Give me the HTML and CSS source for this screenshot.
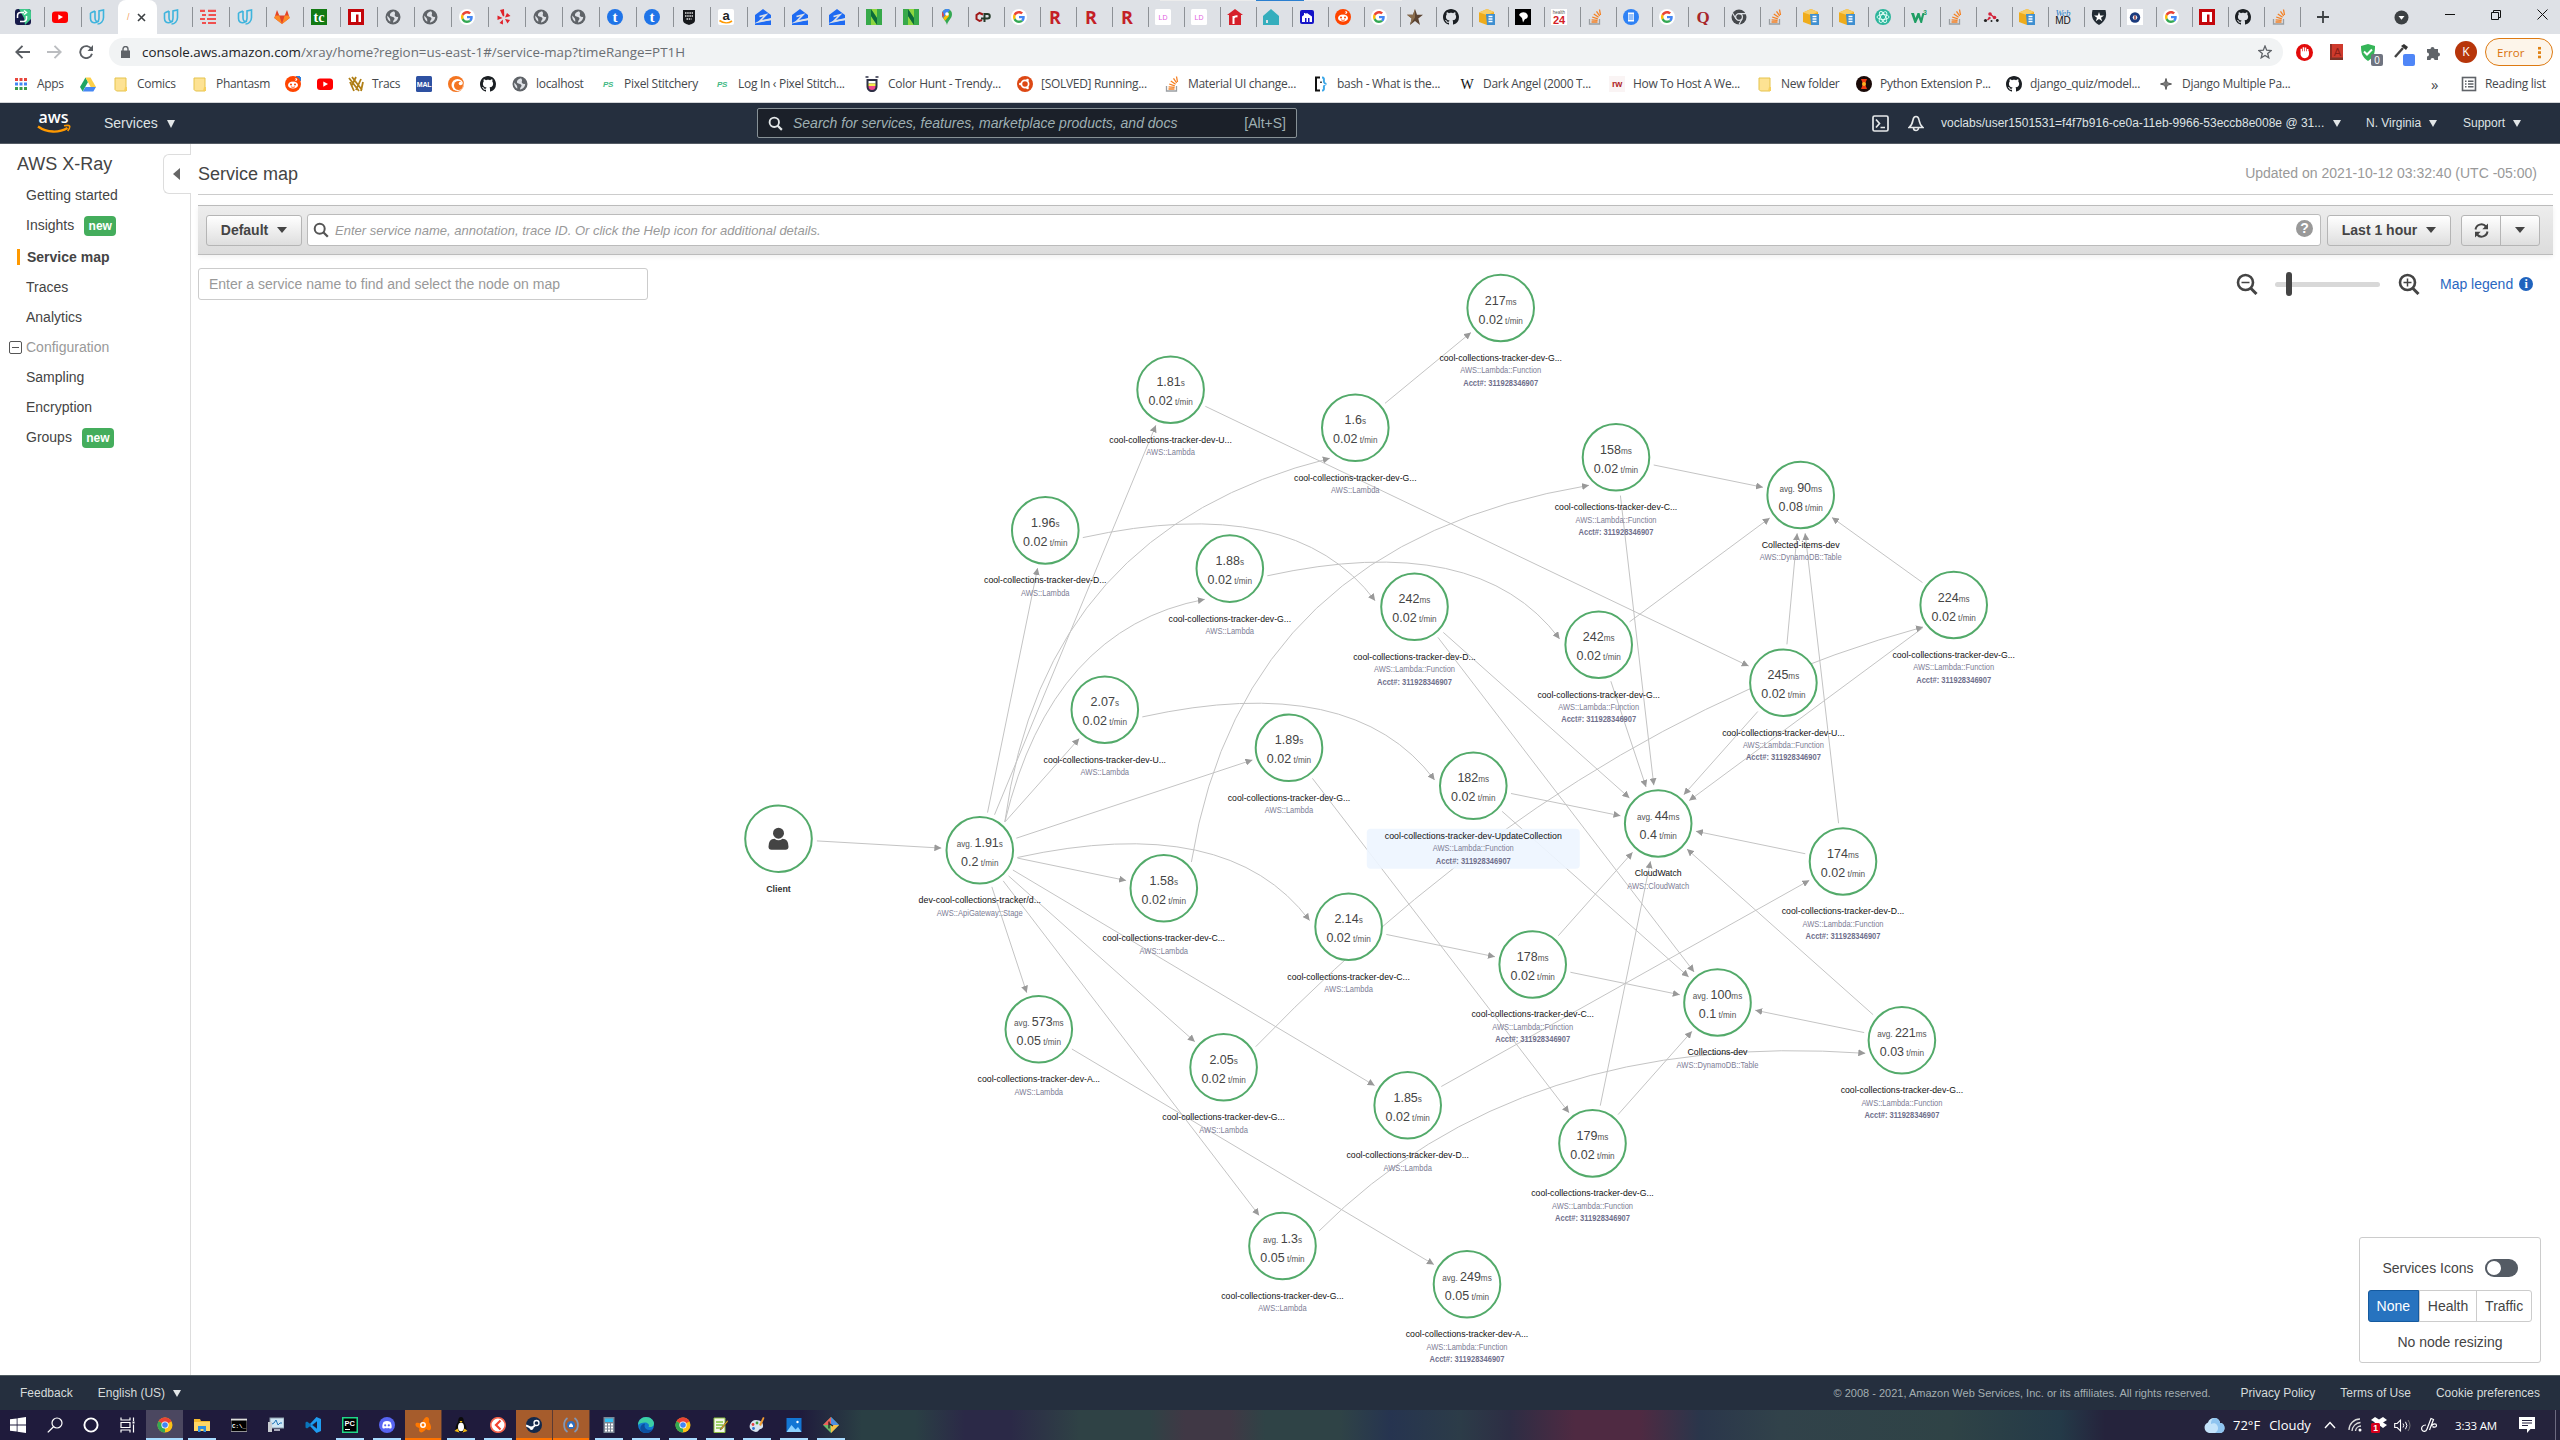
FILE: index.html
```html
<!DOCTYPE html>
<html lang="en">
<head>
<meta charset="utf-8">
<title>AWS X-Ray</title>
<link rel="stylesheet" href="styles.css">
</head>
<body>
<svg class="sprite" width="0" height="0" aria-hidden="true">
  <symbol id="globe" viewBox="0 0 16 16"><circle cx="8" cy="8" r="7.500" fill="#5f6368"/><path d="M9 2.2C6 3 4.600 4.500 5 6.500c.5 1.600 4 1 4.500 2.700.3 1.500-1.500 2-1.500 4.300 3-.6 5.200-3 5.200-5.800-1.600.6-3 .1-3.400-1.200C9.500 5 11 4.500 9 2.200zM2.300 6.500c-.5 2.500.8 5 2.900 6.200.4-2-.2-3.300-1.200-4.300z" fill="#dee1e6"/></symbol>
  <symbol id="google" viewBox="0 0 16 16"><circle cx="8" cy="8" r="8" fill="#fff"/><g transform="translate(2 2) scale(.25)"><path fill="#EA4335" d="M24 9.5c3.54 0 6.71 1.22 9.21 3.6l6.85-6.85C35.9 2.38 30.47 0 24 0 14.62 0 6.51 5.38 2.56 13.22l7.98 6.19C12.43 13.72 17.74 9.5 24 9.5z"/><path fill="#4285F4" d="M46.98 24.55c0-1.57-.15-3.09-.38-4.55H24v9.02h12.94c-.58 2.96-2.26 5.48-4.78 7.18l7.73 6c4.51-4.18 7.09-10.36 7.09-17.65z"/><path fill="#FBBC05" d="M10.53 28.59c-.48-1.45-.76-2.99-.76-4.59s.27-3.14.76-4.59l-7.98-6.19C.92 16.46 0 20.12 0 24c0 3.88.92 7.54 2.56 10.78l7.97-6.19z"/><path fill="#34A853" d="M24 48c6.48 0 11.93-2.13 15.89-5.81l-7.73-6c-2.15 1.45-4.92 2.3-8.16 2.3-6.26 0-11.57-4.22-13.47-9.91l-7.98 6.19C6.51 42.62 14.62 48 24 48z"/></g></symbol>
  <symbol id="github" viewBox="0 0 16 16"><path fill="#1b1f23" d="M8 0C3.58 0 0 3.58 0 8c0 3.54 2.29 6.53 5.47 7.59.4.07.55-.17.55-.38 0-.19-.01-.82-.01-1.49-2.01.37-2.53-.49-2.69-.94-.09-.23-.48-.94-.82-1.13-.28-.15-.68-.52-.01-.53.63-.01 1.08.58 1.23.82.72 1.21 1.87.87 2.33.66.07-.52.28-.87.51-1.07-1.78-.2-3.64-.89-3.64-3.95 0-.87.31-1.59.82-2.15-.08-.2-.36-1.02.08-2.12 0 0 .67-.21 2.2.82.64-.18 1.32-.27 2-.27s1.36.09 2 .27c1.53-1.04 2.2-.82 2.2-.82.44 1.1.16 1.92.08 2.12.51.56.82 1.27.82 2.15 0 3.07-1.87 3.75-3.65 3.95.29.25.54.73.54 1.48 0 1.07-.01 1.93-.01 2.2 0 .21.15.46.55.38A8.01 8.01 0 0016 8c0-4.42-3.58-8-8-8z"/></symbol>
  <symbol id="loop" viewBox="0 0 16 16"><rect width="16" height="16" rx="3" fill="#171a4a"/><path d="M4 0h9a3 3 0 013 3v7L10 16 9 9z" fill="#3ec98a"/><path d="M9 3.500H5.500a3 3 0 00-3 3V9M5 12.500h3.500a3 3 0 003-3V7M9 1.500l2.500 2L9 5.500" fill="none" stroke="#fff" stroke-width="1.500"/></symbol>
  <symbol id="youtube" viewBox="0 0 16 16"><rect y="2.500" width="16" height="11.500" rx="3" fill="#f00"/><path d="M6.300 5.500v5.200L11 8.100z" fill="#fff"/></symbol>
  <symbol id="udacity" viewBox="0 0 16 16"><path d="M1.500 4v5.500c0 6 8.500 5.500 8.500-.5V2l4.500-1v7.500c0 4-3 6.500-6 6.500M6 2v7c0 3 2 4.200 4 3.200M1.500 4L6 2" fill="none" stroke="#3fb4dd" stroke-width="1.600"/></symbol>
  <symbol id="bars" viewBox="0 0 16 16"><path d="M0 1.800h5M8 1.800h8M2 6h4M8.500 6H16M0 10h5M7 10h9M2 14h4M8 14h8" stroke="#f0504f" stroke-width="2.200"/></symbol>
  <symbol id="gitlab" viewBox="0 0 16 16"><path d="M8 15L.3 9 3 1l2.300 5.500h5.400L13 1l2.700 8z" fill="#e24329"/><path d="M8 15L.3 9l1-2.500h4zM8 15l7.700-6-1-2.500h-4z" fill="#fc8a26"/></symbol>
  <symbol id="tc" viewBox="0 0 16 16"><rect width="16" height="16" fill="#137a13"/><text x="8" y="12.500" text-anchor="middle" font-family="Liberation Serif,serif" font-weight="bold" font-size="14" fill="#fff">tc</text></symbol>
  <symbol id="npm" viewBox="0 0 16 16"><rect width="16" height="16" fill="#c4060b"/><path d="M3 3h10v10h-2.500V5.500H8V13H3z" fill="#fff"/></symbol>
  <symbol id="yelp" viewBox="0 0 16 16"><g fill="#e0222a"><path d="M4 1l4-1 .3 7L7 7.500zM1.500 6.500L6.500 9 1.500 11zM6.800 10.500L7 15.500 3.500 14zM9 10l5 1-2.500 3.500zM9 8.500l2-4.500 3.500 3z"/></g></symbol>
  <symbol id="tblue" viewBox="0 0 16 16"><circle cx="8" cy="8" r="8" fill="#1f74e8"/><text x="8" y="13" text-anchor="middle" font-family="Liberation Serif,serif" font-weight="bold" font-size="15" fill="#fff">t</text></symbol>
  <symbol id="badge" viewBox="0 0 16 16"><path d="M2 1h12v10c0 3-3 4-6 5-3-1-6-2-6-5z" fill="#16181c"/><path d="M4 4h8M4 7h8M5.500 10h5" stroke="#ddd" stroke-width="1.500" stroke-dasharray="1.500 .7"/></symbol>
  <symbol id="amazon" viewBox="0 0 16 16"><rect width="16" height="16" rx="2" fill="#fff"/><text x="8" y="10.500" text-anchor="middle" font-family="Liberation Sans,sans-serif" font-weight="bold" font-size="13" fill="#222">a</text><path d="M1.500 11.500c4 3 9 3 12.500.5" fill="none" stroke="#f90" stroke-width="1.600"/></symbol>
  <symbol id="zillow" viewBox="0 0 16 16"><path d="M8 0l8 6v3L4 12l-4 2V6z" fill="#1f6bf2"/><path d="M0 16v-1.500L16 11v5z" fill="#1f6bf2"/><path d="M4.500 7.500l6.500-1.700-6 6.200 11-1.500" fill="none" stroke="#dee1e6" stroke-width="1.600"/></symbol>
  <symbol id="nn" viewBox="0 0 16 16"><rect width="16" height="16" fill="#8ed63f"/><path d="M0 0h5l6 9V0h5v16h-5L5 7v9H0z" fill="#37a94a"/><path d="M5 0l6 9v7L5 7z" fill="#0d6b3a"/></symbol>
  <symbol id="maps" viewBox="0 0 16 16"><path d="M8 16C7 11 3 10 3 5a5 5 0 0110 0c0 5-4 6-5 11z" fill="#34a853"/><path d="M3 5a5 5 0 018-4L4 9C3.300 7.500 3 6.500 3 5z" fill="#4285f4"/><path d="M3.700 2.500L5 6.500 3.800 8.500C2.800 6.500 2.800 4 3.700 2.500z" fill="#ea4335"/><path d="M4.200 9L9 3.500l1 3.500-4 4.700z" fill="#fbbc04"/><circle cx="8" cy="5" r="1.800" fill="#fff"/></symbol>
  <symbol id="cp" viewBox="0 0 16 16"><path d="M8 5.500L4.500 4 1.500 6v4l3 2L7 11" fill="none" stroke="#a01818" stroke-width="2"/><path d="M9.500 13V5h3a2.200 2.200 0 010 4.500H6" fill="none" stroke="#263b2a" stroke-width="2"/></symbol>
  <symbol id="rr" viewBox="0 0 16 16"><text x="8" y="14.500" text-anchor="middle" font-family="Open Sans,sans-serif" font-weight="bold" font-size="18" fill="#c42026">R</text></symbol>
  <symbol id="ld" viewBox="0 0 16 16"><rect width="16" height="16" rx="1.500" fill="#fff"/><text x="8" y="10.500" text-anchor="middle" font-family="Liberation Sans,sans-serif" font-size="7" fill="#df5fdf">LD</text></symbol>
  <symbol id="rhouse" viewBox="0 0 16 16"><path d="M8 0l8 6h-2v10H2V6H0z" fill="#d6202a"/><path d="M6.500 15V7M6.500 9c1-1.500 2-2 4-1.500" stroke="#fff" stroke-width="2" fill="none"/></symbol>
  <symbol id="teal" viewBox="0 0 16 16"><path d="M8 0l8 7v9H0V7z" fill="#35aebd"/><path d="M3 11h2v3H3z" fill="#dee1e6"/></symbol>
  <symbol id="bluehouse" viewBox="0 0 16 16"><rect x="1" y="1" width="14" height="14" rx="2" fill="#1414c8"/><path d="M3 13V7.500L5 6V4h1.500v1L8 4l5 3.500V13h-2.500V9h-1.500v4H7.500V9H6v4z" fill="#fff"/></symbol>
  <symbol id="reddit" viewBox="0 0 16 16"><circle cx="8" cy="8" r="8" fill="#ff4500"/><ellipse cx="8" cy="9" rx="5" ry="3.600" fill="#fff"/><circle cx="6" cy="8.500" r="1" fill="#ff4500"/><circle cx="10" cy="8.500" r="1" fill="#ff4500"/><circle cx="11" cy="3.500" r="1.200" fill="#fff"/><path d="M8 5.500l.7-2.500 2.300.5M6 10.700c1.300.9 2.700.9 4 0" fill="none" stroke="#ff4500" stroke-width=".8"/></symbol>
  <symbol id="star" viewBox="0 0 16 16"><path d="M8 0l2 5.800h6l-4.700 3.700L13 16l-5-4-5 4 1.700-6.500L0 5.800h6z" fill="#5b4331"/><path d="M8 0v8.500L3 16l1.700-6.500L0 5.800h6z" fill="#8a6d4c"/></symbol>
  <symbol id="cube" viewBox="0 0 16 16"><path d="M0 3.500L8 0l7 3v10l-7 3-8-3z" fill="#efac1c"/><path d="M0 3.500L8 6l7-3L8 0z" fill="#f8cd66"/><path d="M7 5h9v11H8z" fill="#3f8fd0"/><path d="M9.500 7.500h4M9.500 10h4M9.500 12.500h4" stroke="#fff" stroke-width="1.300"/></symbol>
  <symbol id="blackdog" viewBox="0 0 16 16"><rect width="16" height="16" fill="#000"/><path d="M4 6c1-3 6-4 8-1 2 2 0 5-2 5L8 13.500 7 9z" fill="#fff"/></symbol>
  <symbol id="h24" viewBox="0 0 16 16"><rect width="16" height="16" fill="#fff"/><text x="8" y="4.500" text-anchor="middle" font-family="Liberation Sans,sans-serif" font-size="4.500" fill="#555">health</text><text x="8" y="14.500" text-anchor="middle" font-family="Liberation Sans,sans-serif" font-weight="bold" font-size="11" fill="#d42027">24</text></symbol>
  <symbol id="stack" viewBox="0 0 16 16"><path d="M2.500 10v5h10v-5" fill="none" stroke="#9a9ea2" stroke-width="1.300"/><path d="M4.500 13h6M4.600 10.800l6 .6M5.200 8l5.600 1.800M6.800 5l4.800 3.300M9.500 2.300l3.200 4.700M12.500.5l1 5.500" stroke="#f48024" stroke-width="1.300"/></symbol>
  <symbol id="bluedoc" viewBox="0 0 16 16"><circle cx="8" cy="8" r="8" fill="#2f82f5"/><path d="M5 3.500h6v9H5z" fill="#fff"/><path d="M5.500 6h5M5.500 8h5M5.500 10h5" stroke="#2f82f5"/></symbol>
  <symbol id="quora" viewBox="0 0 16 16"><text x="8" y="13.500" text-anchor="middle" font-family="Liberation Serif,serif" font-weight="bold" font-size="17" fill="#a8262a">Q</text></symbol>
  <symbol id="chromegrey" viewBox="0 0 16 16"><circle cx="8" cy="8" r="7.500" fill="#45484c"/><circle cx="8" cy="8" r="3.400" fill="#45484c" stroke="#dee1e6" stroke-width="1.200"/><path d="M8 4.600h7M5 9.700L1.500 4M11 9.700L8 15.500" stroke="#dee1e6" stroke-width="1.200"/></symbol>
  <symbol id="atom" viewBox="0 0 16 16"><circle cx="8" cy="8" r="8" fill="#2cb59b"/><g fill="none" stroke="#e5fff8" stroke-width=".9"><ellipse cx="8" cy="8" rx="6" ry="2.500"/><ellipse cx="8" cy="8" rx="6" ry="2.500" transform="rotate(60 8 8)"/><ellipse cx="8" cy="8" rx="6" ry="2.500" transform="rotate(120 8 8)"/></g></symbol>
  <symbol id="w3" viewBox="0 0 16 16"><path d="M0 4h3l1.500 5L6.500 4h2L10 9l1.500-5h2L11 14H9.500L7.500 8.500 5 14H3.500z" fill="#1f9e64"/><text x="14" y="5.500" text-anchor="middle" font-family="Liberation Sans,sans-serif" font-weight="bold" font-size="6.500" fill="#1f9e64">3</text></symbol>
  <symbol id="dots" viewBox="0 0 16 16"><path d="M7 5l5 4M4.500 11l2-2" stroke="#d4223a" stroke-width="1.500"/><g fill="#d4223a"><circle cx="7" cy="5" r="1.800"/><circle cx="11.500" cy="8.500" r="1.800"/><circle cx="6.500" cy="9" r="1.200"/></g><g fill="#222"><circle cx="2.500" cy="11.500" r="1.600"/><circle cx="14.300" cy="11.500" r="1.400"/><circle cx="8.500" cy="12" r="1"/></g></symbol>
  <symbol id="webmd" viewBox="0 0 16 16"><text x="8" y="6.500" text-anchor="middle" font-family="Liberation Serif,serif" font-style="italic" font-size="9" fill="#2a7fc4">Web</text><text x="8" y="15" text-anchor="middle" font-family="Liberation Sans,sans-serif" font-size="10" fill="#111">MD</text></symbol>
  <symbol id="shield" viewBox="0 0 16 16"><path d="M1.500 1h13c1.500 6 .5 11-6.500 15C1 12 0 7 1.500 1z" fill="#222b33"/><path d="M8 3l1.200 3.500H13L10 8.700l1.200 3.500L8 10l-3.200 2.200L6 8.700 3 6.500h3.800z" fill="#fff"/></symbol>
  <symbol id="seal" viewBox="0 0 16 16"><rect width="16" height="16" fill="#fff"/><circle cx="8" cy="8.500" r="5.200" fill="#1b3a7d"/><circle cx="8" cy="8.500" r="2.300" fill="#e7edf5"/><path d="M8 6.500v4" stroke="#8a2a2a" stroke-width="1.400"/></symbol>

  <symbol id="apps" viewBox="0 0 16 16"><path d="M2 3.500h12" stroke="#e8453c" stroke-width="3" stroke-dasharray="3 1.500"/><path d="M2 8h12" stroke="#4285f4" stroke-width="3" stroke-dasharray="3 1.500"/><path d="M2 12.500h12" stroke="#3b9c4b" stroke-width="3" stroke-dasharray="3 1.500"/></symbol>
  <symbol id="drive" viewBox="0 0 16 16"><path d="M5.500 1.500L0 11l2.700 4.500L8 6z" fill="#1fa463"/><path d="M5.500 1.500h5L16 11h-5.300z" fill="#fdd049"/><path d="M5.500 11H16l-2.700 4.500H2.700z" fill="#4688f4"/></symbol>
  <symbol id="folder" viewBox="0 0 16 16"><path d="M2 2h11v13H3.500L2 13.500z" fill="#fde293" stroke="#e5c34c"/><path d="M12 11h2v4h-3z" fill="#f6cf5c"/></symbol>
  <symbol id="tracs" viewBox="0 0 16 16"><path d="M1 2l10 13M4 1l10 13M2 6l4 9M8 1l-4 8M13 3L8 14M15 6l-2 9" stroke="#b07f16" stroke-width="1.800"/></symbol>
  <symbol id="mal" viewBox="0 0 16 16"><rect width="16" height="16" rx="1.500" fill="#2e51a2"/><text x="8" y="11" text-anchor="middle" font-family="Liberation Sans,sans-serif" font-weight="bold" font-size="7" fill="#fff">MAL</text></symbol>
  <symbol id="crunchy" viewBox="0 0 16 16"><circle cx="8" cy="8" r="8" fill="#f47521"/><circle cx="9.500" cy="9" r="6" fill="#fff"/><circle cx="10.500" cy="9.500" r="4.500" fill="#f47521"/><circle cx="12.500" cy="7.500" r="1.800" fill="#fff"/></symbol>
  <symbol id="ps" viewBox="0 0 16 16"><text x="8" y="11" text-anchor="middle" font-family="Liberation Sans,sans-serif" font-style="italic" font-weight="bold" font-size="8" fill="#41b883">PS</text></symbol>
  <symbol id="hunt" viewBox="0 0 16 16"><path d="M2.500 3h11v7c0 4-2.500 6-5.500 6s-5.500-2-5.500-6z" fill="#2d2f45"/><path d="M4.500 5h7v2.500h-7z" fill="#fff"/><path d="M4.500 7.500h7V10h-7z" fill="#f9ed4b"/><path d="M4.500 10h7c0 3-1.500 4-3.500 4s-3.500-1-3.500-4z" fill="#f0478b"/><path d="M1.500 1h3M11.500 1h3" stroke="#2d2f45" stroke-width="1.500"/></symbol>
  <symbol id="ubuntu" viewBox="0 0 16 16"><circle cx="8" cy="8" r="8" fill="#dd4814"/><circle cx="8" cy="8" r="3.600" fill="none" stroke="#fff" stroke-width="1.700"/><circle cx="3.300" cy="8" r="1.300" fill="#fff"/><circle cx="10.500" cy="4" r="1.300" fill="#fff"/><circle cx="10.500" cy="12" r="1.300" fill="#fff"/></symbol>
  <symbol id="braces" viewBox="0 0 16 16"><path d="M7 1.500H3v13h4" fill="none" stroke="#111" stroke-width="2"/><path d="M9 1.500c3 0 1.500 3 2 4.500.3 1 1 2 2.500 2-1.500 0-2.200 1-2.500 2-.5 1.500 1 4.500-2 4.500" fill="none" stroke="#3ea8e8" stroke-width="2"/><path d="M8 5.500v1.500" stroke="#111" stroke-width="1.500"/></symbol>
  <symbol id="wiki" viewBox="0 0 16 16"><text x="8" y="13" text-anchor="middle" font-family="Liberation Serif,serif" font-size="14" fill="#111">W</text></symbol>
  <symbol id="rw" viewBox="0 0 16 16"><rect width="16" height="16" fill="#faf4f4"/><text x="8" y="11" text-anchor="middle" font-family="Liberation Sans,sans-serif" font-weight="bold" font-size="9" fill="#b01e28">rw</text></symbol>
  <symbol id="pyext" viewBox="0 0 16 16"><circle cx="8" cy="8" r="8" fill="#1a0a08"/><path d="M5 3h6L9 8l2 5H5l2-5z" fill="#f03a12"/><circle cx="8" cy="8" r="2" fill="#ffb020"/></symbol>
  <symbol id="spark" viewBox="0 0 16 16"><path d="M8 3l1.300 3.700L13.500 8 9.300 9.300 8 13 6.700 9.300 2.500 8l4.200-1.300z" fill="#888" stroke="#555" stroke-width="1"/><path d="M8 2v12" stroke="#666"/></symbol>

  <symbol id="chrome" viewBox="0 0 16 16"><circle cx="8" cy="8" r="7.500" fill="#fbc116"/><path d="M8 8L1.500 4.250A7.500 7.500 0 0114.500 4.250z" fill="#ea4335"/><path d="M8 8l0 7.500A7.500 7.500 0 011.500 4.250z" fill="#34a853"/><circle cx="8" cy="8" r="3.600" fill="#fff"/><circle cx="8" cy="8" r="2.800" fill="#4285f4"/></symbol>
  <symbol id="windows" viewBox="0 0 16 16"><path d="M0 2.300l6.700-.9v6.100H0zM7.500 1.300L16 0v7.500H7.500zM0 8.400h6.700v6.200L0 13.700zM7.500 8.400H16V16l-8.500-1.200z" fill="#fff"/></symbol>
  <symbol id="tsearch" viewBox="0 0 16 16"><circle cx="10" cy="6" r="5" fill="none" stroke="#fff" stroke-width="1.200"/><path d="M6.500 9.700L.8 15.400" stroke="#fff" stroke-width="1.300"/></symbol>
  <symbol id="cortana" viewBox="0 0 16 16"><circle cx="8" cy="8" r="6.600" fill="none" stroke="#fff" stroke-width="1.900"/></symbol>
  <symbol id="taskview" viewBox="0 0 16 16"><path d="M1 .5V3h9V.5M1 15.500V13h9v2.500M1 5.500h9v5H1zM13.500.5V4M13.500 7.500v8" fill="none" stroke="#fff" stroke-width="1.200"/><path d="M12.500 4.500h2v2h-2z" fill="#fff"/></symbol>
  <symbol id="explorer" viewBox="0 0 16 16"><path d="M0 2h6l1 2h9v10H0z" fill="#f5b92e"/><path d="M0 5h16v9H0z" fill="#ffd766"/><path d="M4 9h8v6h-2.500v-3h-3v3H4z" fill="#2f8fe0"/></symbol>
  <symbol id="cmd" viewBox="0 0 16 16"><rect y="2" width="16" height="12.500" fill="#000" stroke="#b5b5b5" stroke-width=".8"/><path d="M0 2h16v1.500H0z" fill="#ddd"/><text x="1" y="11" font-family="Liberation Mono,monospace" font-weight="bold" font-size="5.800" fill="#fff">C:\_</text></symbol>
  <symbol id="monitor" viewBox="0 0 16 16"><rect x="2" y="1" width="14" height="10" fill="#cfe7f5" stroke="#90a0ac"/><path d="M4 7l2-1 2-3 2 5 2-2h2" fill="none" stroke="#2577b8"/><rect y="5" width="4" height="10" fill="#c9ccd1"/><path d="M6 12h6v2H6z" fill="#aab"/></symbol>
  <symbol id="vscode" viewBox="0 0 16 16"><path d="M11.500 0L16 2v12l-4.500 2L4 8z" fill="#1f9cf0"/><path d="M12 4v8L2 4.500.5 5.500v5L2 11.500z" fill="#0a75bb"/><path d="M12 4.500L7.500 8l4.500 3.500z" fill="#1e1a3a"/></symbol>
  <symbol id="pycharm" viewBox="0 0 16 16"><rect width="16" height="16" fill="#21d789"/><rect x="1.500" y="1.500" width="13" height="13" fill="#000"/><text x="2.500" y="8.500" font-family="Liberation Sans,sans-serif" font-weight="bold" font-size="7.500" fill="#fff">PC</text><path d="M3 12.500h5" stroke="#fff"/></symbol>
  <symbol id="discord" viewBox="0 0 16 16"><circle cx="8" cy="8" r="8" fill="#5865f2"/><path d="M4.500 5c2-1.200 5-1.200 7 0 1 2 1.500 4 1 6-1 .7-2 .8-2.500 0-1.300.3-2.700.3-4 0-.5.800-1.500.7-2.500 0-.5-2 0-4 1-6z" fill="#fff"/><circle cx="6.200" cy="8.300" r="1.100" fill="#5865f2"/><circle cx="9.800" cy="8.300" r="1.100" fill="#5865f2"/></symbol>
  <symbol id="avast" viewBox="0 0 16 16"><path d="M12 0c3 1 2 4 2 5 2 3 3 6 1 8-2 1-3-1-4-1-2 3-5 4-6 3-2-2 0-3-1-4C0 10 0 7 1 6c2-1 4 1 5 0 2-1 3-6 6-6z" fill="#ff7800"/><circle cx="8" cy="8" r="2.200" fill="none" stroke="#fff" stroke-width="1.500"/></symbol>
  <symbol id="tux" viewBox="0 0 16 16"><path d="M8 0c3 0 2.500 3.500 3 5 1 2 3.500 5 2 8-2 3-8 3-10 0-1.500-3 1-6 2-8C5.500 3.500 5 0 8 0z" fill="#0b0b0b"/><ellipse cx="8" cy="10" rx="3" ry="4.300" fill="#fff"/><path d="M6.500 4h3L8 6zM1.500 14l3-2.500 2 4zM14.500 14l-3-2.500-2 4z" fill="#f8bf13"/></symbol>
  <symbol id="redk" viewBox="0 0 16 16"><circle cx="8" cy="8" r="7.300" fill="#fff" stroke="#f4644d" stroke-width="1.600"/><path d="M10.500 3.500L6 8l4.500 4.500" fill="none" stroke="#f4442e" stroke-width="2.200"/></symbol>
  <symbol id="steam" viewBox="0 0 16 16"><circle cx="8" cy="8" r="8" fill="#13294b"/><circle cx="10.500" cy="6" r="2.500" fill="none" stroke="#fff" stroke-width="1.300"/><path d="M0 8.500L5.500 11 9 8.500" fill="none" stroke="#fff" stroke-width="2"/><circle cx="5.500" cy="11.300" r="1.800" fill="#fff"/></symbol>
  <symbol id="ring" viewBox="0 0 16 16"><path d="M4.500 1C0 4 0 12 4.500 15M11.500 1C16 4 16 12 11.500 15" fill="none" stroke="#8296b5" stroke-width="1.800"/><circle cx="8" cy="8" r="4" fill="#2f6fc0"/><path d="M6 8.300L8 6l2 2.300V10H6z" fill="#fff"/></symbol>
  <symbol id="calc" viewBox="0 0 16 16"><rect x="2.500" width="11" height="16" fill="#7b8794"/><path d="M4 1.500h8V5H4z" fill="#33c0f3"/><path d="M4 7.500h8M4 10.500h8M4 13.500h8" stroke="#fff" stroke-width="1.800" stroke-dasharray="2 1"/></symbol>
  <symbol id="edge" viewBox="0 0 16 16"><circle cx="8" cy="8" r="8" fill="#1279cf"/><path d="M0 8C0 3 4 0 8 0c5 0 8 3.500 8 6.500 0 3-3 4-5.500 3.500C12 8 10 5.500 7 5.500 4 5.500 1 6.500 0 8z" fill="#3ccfa5"/><path d="M6.500 9c.5 4 5 5 8.500 3-2 4-8 5.500-12 2C1 11 3 7 7 6.500z" fill="#0c4f9f"/></symbol>
  <symbol id="notepad" viewBox="0 0 16 16"><path d="M2 1h11v14.500H2z" fill="#f4f8ea" stroke="#8bbf3f"/><path d="M4 5h7M4 8h7M4 11h5" stroke="#83c441" stroke-width="1.600"/><path d="M15.500 3L9 11l-1 2 2-1 6-7.500z" fill="#f7b512" stroke="#333" stroke-width=".5"/></symbol>
  <symbol id="paint" viewBox="0 0 16 16"><path d="M7 3c5 0 7.500 3 7 6.500-.5 3-3 2-4 3.500-1 2-3 2.500-5 1.500C1 13 0 10 1 7.500 2 5 4 3 7 3z" fill="#d7e4f0"/><circle cx="4" cy="7.500" r="1.400" fill="#e23e3e"/><circle cx="8" cy="6" r="1.400" fill="#3c9c3c"/><circle cx="4.500" cy="11.500" r="1.400" fill="#2f75d0"/><path d="M10 8l4-8 1.500.8L12 9z" fill="#f09c32"/></symbol>
  <symbol id="photos" viewBox="0 0 16 16"><rect x=".5" y="1" width="15" height="14" fill="#1376d4"/><path d="M.5 15l5-7 4 4.500L12 10l3.500 5z" fill="#8bd1ff"/><circle cx="11.500" cy="5" r="1.200" fill="#fff"/></symbol>
  <symbol id="gitbash" viewBox="0 0 16 16"><path d="M8 0l8 8-8 8-8-8z" fill="#6ab96a"/><path d="M8 0l8 8H8z" fill="#4f8fe0"/><path d="M8 0v8H0z" fill="#f0605a"/><path d="M8 16V8h8z" fill="#f5c04a"/><path d="M6 4.500v7M6 6.500l4 2.500" stroke="#222" stroke-width="1.300"/></symbol>
  <symbol id="mag" viewBox="0 0 16 16"><circle cx="6.700" cy="6.700" r="5" fill="none" stroke="currentColor" stroke-width="2"/><path d="M10.300 10.300l4.500 4.500" stroke="currentColor" stroke-width="2.300"/></symbol>
</svg>

<div class="screen">
  <div class="tabstrip">
    <div class="topbar"></div>
    <div class="tabs tabs-a" id="tabs-a"></div>
    <div class="tabs tabs-b" id="tabs-b"></div>
    <svg class="plus" width="14" height="14"><path d="M7 1v12M1 7h12" stroke="#3c4043" stroke-width="1.800"/></svg>
    <div class="winctl">
      <svg width="15" height="15" viewBox="0 0 15 15"><circle cx="7.500" cy="7.500" r="7" fill="#3c4043"/><path d="M4.500 6l3 3.800 3-3.800z" fill="#fff"/></svg>
      <svg width="10" height="12" viewBox="0 0 10 12"><path d="M0 3.500h10" stroke="#111"/></svg>
      <svg width="10" height="10" viewBox="0 0 10 10"><path d="M.5 2.500h7v7h-7zM2.500 2.500v-2h7v7h-2" fill="none" stroke="#111"/></svg>
      <svg width="11" height="11" viewBox="0 0 11 11"><path d="M.5.500l10 10M10.500.500l-10 10" stroke="#111"/></svg>
    </div>
  </div>

  <div class="addressbar">
    <div class="navbtns">
      <svg width="15" height="14" viewBox="0 0 15 14"><path d="M7.500.800L1.300 7l6.200 6.200M1.500 7H15" fill="none" stroke="#5a5e63" stroke-width="1.900"/></svg>
      <svg width="15" height="14" viewBox="0 0 15 14"><path d="M7.500.800L13.700 7l-6.200 6.200M13.500 7H0" fill="none" stroke="#bbbdc0" stroke-width="1.900"/></svg>
      <svg width="15" height="14" viewBox="0 0 15 14"><path d="M12.500 4.200A6 6 0 1013 8.800" fill="none" stroke="#5a5e63" stroke-width="1.900"/><path d="M14 0v6H8.500z" fill="#5a5e63"/></svg>
    </div>
    <div class="pill">
      <svg width="9" height="12" viewBox="0 0 9 12"><path d="M0 4.500h9V12H0z" fill="#5f6368"/><path d="M2 5V3a2.500 2.500 0 015 0v2" fill="none" stroke="#5f6368" stroke-width="1.400"/></svg>
      <span class="url">console.aws.amazon.com<span class="path">/xray/home?region=us-east-1#/service-map?timeRange=PT1H</span></span>
      <svg class="bkstar" width="14" height="14" viewBox="0 0 14 14"><path d="M7 1l1.700 4.200 4.500.3L9.700 8.400l1.100 4.400L7 10.400l-3.800 2.400 1.100-4.400L.8 5.500l4.500-.3z" fill="none" stroke="#5f6368" stroke-width="1.300"/></svg>
    </div>
    <div class="exts">
      <svg width="17" height="17" viewBox="0 0 16 16"><circle cx="8" cy="8" r="8" fill="#e20a0a"/><path d="M5 8V4.500M7 7V3M9 7V3.300M11 8V4.800M5 7.500h6.500V10c-1 3.500-5 3.500-6.500 0z" stroke="#fff" stroke-width="1.400" fill="#fff"/></svg>
      <svg width="14" height="16" viewBox="0 0 14 16"><path d="M0 0h13v14H0z" fill="#cf3a2c"/><path d="M0 13.500h13V16H0z" fill="#7d3328"/><path d="M0 0h2v14H0z" fill="#8f3026"/><text x="7.500" y="11.500" text-anchor="middle" font-family="Liberation Sans,sans-serif" font-size="11" fill="#8b1f18">A</text></svg>
      <svg width="23" height="22" viewBox="0 0 23 22"><path d="M1 2l7-2 7 2c0 7-1 11-7 15C2 13 1 9 1 2z" fill="#35b558"/><path d="M4 7.500l3 3 5-5" fill="none" stroke="#fff" stroke-width="2"/><rect x="11" y="10" width="12" height="12" rx="2" fill="#6f7480"/><text x="17" y="19.500" text-anchor="middle" font-family="Liberation Sans,sans-serif" font-size="10" fill="#fff">0</text></svg>
      <svg width="23" height="22" viewBox="0 0 23 22"><path d="M3 13L11 4" stroke="#444" stroke-width="2.400"/><path d="M9 2l5 4 2-3-4-3z" fill="#333"/><rect x="11" y="10" width="12" height="12" rx="2" fill="#4f86f7"/></svg>
      <svg width="15" height="15" viewBox="0 0 15 15"><path d="M1 4h3.500a2 2 0 114 0H12v3.500a2 2 0 110 4V15H8.500a2 2 0 10-4 0H1v-3.500a2 2 0 100-4z" fill="#5f6368"/></svg>
      <span class="avatar">K</span>
      <span class="error">Error<i></i></span>
    </div>
  </div>

  <div class="bookmarks">
    <div class="bm"><svg><use href="#apps"/></svg>Apps</div>
    <div class="bm"><svg><use href="#drive"/></svg></div>
    <div class="bm"><svg><use href="#folder"/></svg>Comics</div>
    <div class="bm"><svg><use href="#folder"/></svg>Phantasm</div>
    <div class="bm dot"><svg><use href="#reddit"/></svg></div>
    <div class="bm"><svg><use href="#youtube"/></svg></div>
    <div class="bm"><svg><use href="#tracs"/></svg>Tracs</div>
    <div class="bm"><svg><use href="#mal"/></svg></div>
    <div class="bm"><svg><use href="#crunchy"/></svg></div>
    <div class="bm"><svg><use href="#github"/></svg></div>
    <div class="bm"><svg><use href="#globe"/></svg>localhost</div>
    <div class="bm"><svg><use href="#ps"/></svg>Pixel Stitchery</div>
    <div class="bm"><svg><use href="#ps"/></svg>Log In ‹ Pixel Stitch...</div>
    <div class="bm"><svg><use href="#hunt"/></svg>Color Hunt - Trendy...</div>
    <div class="bm"><svg><use href="#ubuntu"/></svg>[SOLVED] Running...</div>
    <div class="bm"><svg><use href="#stack"/></svg>Material UI change...</div>
    <div class="bm"><svg><use href="#braces"/></svg>bash - What is the...</div>
    <div class="bm"><svg><use href="#wiki"/></svg>Dark Angel (2000 T...</div>
    <div class="bm"><svg><use href="#rw"/></svg>How To Host A We...</div>
    <div class="bm"><svg><use href="#folder"/></svg>New folder</div>
    <div class="bm"><svg><use href="#pyext"/></svg>Python Extension P...</div>
    <div class="bm"><svg><use href="#github"/></svg>django_quiz/model...</div>
    <div class="bm"><svg><use href="#spark"/></svg>Django Multiple Pa...</div>
    <div class="bm more">»</div>
    <div class="bm reading"><svg viewBox="0 0 16 16"><rect x="1.500" y="1.500" width="13" height="13" fill="none" stroke="#5f6368" stroke-width="1.600"/><path d="M4 5.200h1.500M7 5.200h5.500M4 8h1.500M7 8h5.500M4 10.800h1.500M7 10.800h5.500" stroke="#5f6368" stroke-width="1.400"/></svg>Reading list</div>
  </div>

  <header class="aws">
    <svg class="awslogo" width="34" height="22" viewBox="0 0 34 22"><text x="16.500" y="11" text-anchor="middle" font-family="Open Sans,sans-serif" font-weight="600" font-size="16" textLength="30" lengthAdjust="spacingAndGlyphs" fill="#fff">aws</text><path d="M1 14.500c9 6.500 21 6.500 29.500 1.500" fill="none" stroke="#f90" stroke-width="2.400"/><path d="M27 13.800c3-.6 5-.5 5.500.2s-.3 3-1.800 5" fill="none" stroke="#f90" stroke-width="1.600"/></svg>
    <span class="services">Services <b class="tri"></b></span>
    <div class="awssearch"><svg width="15" height="15"><use href="#mag"/></svg><em>Search for services, features, marketplace products, and docs</em><span>[Alt+S]</span></div>
    <svg class="shell" width="17" height="17" viewBox="0 0 17 17"><rect x="1" y="1" width="15" height="15" rx="1.500" fill="none" stroke="#e6e9ea" stroke-width="1.700"/><path d="M4 4.500l3.500 4L4 12.500M8.500 12.500H13" fill="none" stroke="#e6e9ea" stroke-width="1.700"/></svg>
    <svg class="bell" width="16" height="17" viewBox="0 0 16 17"><path d="M1 12.500c2.500-2 3.500-4.500 4-7.500.3-2 1-3.500 3-3.500s2.700 1.500 3 3.500c.5 3 1.500 5.500 4 7.500zM5.500 13a2.500 2.500 0 005 0" fill="none" stroke="#e6e9ea" stroke-width="1.600"/></svg>
    <span class="hitem user">voclabs/user1501531=f4f7b916-ce0a-11eb-9966-53eccb8e008e @ 31... <b class="tri"></b></span>
    <span class="hitem region">N. Virginia <b class="tri"></b></span>
    <span class="hitem support">Support <b class="tri"></b></span>
  </header>

  <div class="main">
    <nav class="side">
      <h1>AWS X-Ray</h1>
      <a>Getting started</a>
      <a>Insights <span class="new">new</span></a>
      <a class="on">Service map</a>
      <a>Traces</a>
      <a>Analytics</a>
      <a class="cfg">Configuration</a>
      <a>Sampling</a>
      <a>Encryption</a>
      <a>Groups <span class="new">new</span></a>
      <div class="collapse"></div>
    </nav>
    <section class="content">
      <div class="titlebar"><h2>Service map</h2><span>Updated on 2021-10-12 03:32:40 (UTC -05:00)</span></div>
      <div class="toolbar">
        <div class="btn default">Default <b class="caret"></b></div>
        <div class="query"><svg width="16" height="16"><use href="#mag"/></svg><em>Enter service name, annotation, trace ID. Or click the Help icon for additional details.</em><i class="help">?</i></div>
        <div class="btn hour">Last 1 hour <b class="caret"></b></div>
        <div class="btn pair"><span><svg width="15" height="15" viewBox="0 0 15 15"><path d="M1.500 6.500A6 6 0 0112 3.500M13.500 8.500A6 6 0 013 11.500" fill="none" stroke="#444" stroke-width="2"/><path d="M14 .5v5.700H8.300zM1 14.500V8.800h5.700z" fill="#444"/></svg></span><span><b class="caret"></b></span></div>
      </div>
      <div class="maptools">
        <div class="find">Enter a service name to find and select the node on map</div>
        <svg class="zoomico" width="22" height="22" viewBox="0 0 22 22"><circle cx="9.500" cy="9.500" r="7.500" fill="none" stroke="#444" stroke-width="2.600"/><path d="M14.500 15l6 6" stroke="#444" stroke-width="3"/><path d="M5.500 9.500h8" stroke="#444" stroke-width="1.500"/></svg>
        <div class="slider"><i></i></div>
        <svg class="zoomico" width="22" height="22" viewBox="0 0 22 22"><circle cx="9.500" cy="9.500" r="7.500" fill="none" stroke="#444" stroke-width="2.600"/><path d="M14.500 15l6 6" stroke="#444" stroke-width="3"/><path d="M5.500 9.500h8M9.500 5.500v8" stroke="#444" stroke-width="1.500"/></svg>
        <span class="legendlink">Map legend <i>i</i></span>
      </div>
      <div class="resize">
        <div class="row">Services Icons <i class="toggle"></i></div>
        <div class="seg"><span class="sel">None</span><span>Health</span><span>Traffic</span></div>
        <div class="row note">No node resizing</div>
      </div>
    </section>
    <svg class="map" id="map" width="2560" height="1231" viewBox="0 144 2560 1231">
      <defs><marker id="arrow" viewBox="0 0 7 7" refX="7" refY="3.500" markerWidth="7" markerHeight="7" orient="auto" markerUnits="userSpaceOnUse"><path d="M0 0L7 3.500 0 7z" fill="#999"/></marker></defs>
    </svg>
  </div>

  <footer class="awsfoot">
    <span class="fb">Feedback</span><span class="lang">English (US) <b class="tri"></b></span>
    <span class="copy">© 2008 - 2021, Amazon Web Services, Inc. or its affiliates. All rights reserved.</span>
    <span class="fl">Privacy Policy</span><span class="fl">Terms of Use</span><span class="fl">Cookie preferences</span>
  </footer>

  <div class="taskbar">
    <div class="apps" id="apps-row"></div>
    <div class="tray">
      <svg class="cloud" width="22" height="17" viewBox="0 0 22 17"><path d="M6 16a5.500 5.500 0 01-1-10.500C6 2 9 .5 12 1c3 .3 5 2.500 5 5 3 0 4.500 2 4.500 5s-2 5-5 5z" fill="#c4e3fa"/><path d="M12 1c3 .3 5 2.500 5 5 3 0 4.500 2 4.500 5s-2 5-5 5H12c3-2 4-5 2-8-1-2-4-2-6-1 0-3 1-6 4-6z" fill="#8fc4f0"/></svg>
      <span class="temp"><span>72°F</span><span>Cloudy</span></span>
      <svg width="12" height="8" viewBox="0 0 12 8"><path d="M1 7l5-5.500L11 7" fill="none" stroke="#fff" stroke-width="1.400"/></svg>
      <svg class="wifi" width="14" height="14" viewBox="0 0 14 14"><path d="M1 12A11 11 0 0112 1M4 13a9 9 0 018.500-8.500M7.500 13A5.500 5.500 0 0113 8" fill="none" stroke="#ddd" stroke-width="1.300"/><circle cx="12" cy="12" r="1.500" fill="#fff"/></svg>
      <svg class="dbx" width="16" height="16" viewBox="0 0 16 16"><path d="M4 0l4 2.500L12 0l4 3-4 2.500L16 8l-4 3-4-3-4 3-4-3 4-2.500L0 3z" fill="#fff"/><rect y="6" width="9" height="10" rx="1.500" fill="#d6001c"/><text x="4.500" y="14" text-anchor="middle" font-family="Liberation Sans,sans-serif" font-size="8.500" font-weight="bold" fill="#fff">1</text></svg>
      <svg class="vol" width="17" height="13" viewBox="0 0 17 13"><path d="M.7 4.500h2.500L6.500 1.200v10.600L3.200 8.500H.7z" fill="none" stroke="#fff" stroke-width="1.100"/><path d="M9 4.500q1.500 2 0 4M11.500 2.800q2.800 3.700 0 7.400" fill="none" stroke="#fff"/><path d="M14 1q4 5.500 0 11" fill="none" stroke="#777"/></svg>
      <svg class="pen" width="17" height="16" viewBox="0 0 17 16"><path d="M5 8C1 8 0 11 1 13s4 2 5-1L10 1.500l2.500 1L8.500 13M10.500 9c2-3 5-2.500 5-.5s-3 2-4 1" fill="none" stroke="#fff" stroke-width="1.200"/></svg>
      <span class="clock">3:33 AM</span>
      <svg width="16" height="16" viewBox="0 0 16 16"><path d="M0 0h16v12h-4.500L8 16v-4H0z" fill="#fff"/><path d="M3 3.500h10M3 6h10M3 8.500h6" stroke="#25203f"/></svg>
      <i class="peek"></i>
    </div>
  </div>
</div>
<script src="map.js"></script>
</body>
</html>
```
FILE: styles.css
```css
* { box-sizing: border-box; }
html, body { margin: 0; padding: 0; }
body { width: 2560px; height: 1440px; overflow: hidden; background: #fff; font-family: "Liberation Sans", Arial, sans-serif; color: #444; }
.sprite { display: none; }
svg { display: block; flex: none; }
.screen { display: flex; flex-direction: column; width: 2560px; height: 1440px; }

/* browser chrome */
.tabstrip { position: relative; flex: 0 0 34px; display: flex; padding-left: 8px; background: #dee1e6; align-items: center; }
.topbar { position: absolute; left: 1160px; top: 0; width: 242px; height: 1px; background: linear-gradient(90deg, #ececec 96px, #2a7fd0 96px 144px, #ececec 144px); }
.tabs { display: flex; height: 34px; align-items: center; }
.tab { display: flex; align-items: center; height: 20px; border-right: 1px solid #8d9196; padding-left: 7px; }
.tabs-a .tab { width: 37px; }
.tabs-b .tab { width: 36px; padding-left: 6px; }
.tab svg { width: 16px; height: 16px; }
.tabs-a .tab.active { height: 34px; background: #fff; border: 0; border-radius: 8px 8px 0 0; width: 39px; margin: 0 -1px; padding-left: 9px; gap: 7px; color: #f4a468; font-size: 9px; }
.tab.active svg { width: 9px; height: 9px; }
.tab.noline { border-color: transparent; }
.plus { margin-left: 15px; }
.winctl { display: flex; align-items: center; margin-left: 64px; }
.winctl svg:nth-child(2) { margin-left: 36px; }
.winctl svg:nth-child(3) { margin-left: 36px; margin-top: -5px; }
.winctl svg:nth-child(4) { margin-left: 36px; margin-top: -5px; }
.addressbar { flex: 0 0 36px; display: flex; align-items: center; padding: 0 0 0 15px; background: #fff; font-family: "Open Sans", "Noto Sans", sans-serif; }
.navbtns { display: flex; gap: 17px; width: 94px; }
.pill { display: flex; align-items: center; width: 2174px; height: 28px; border-radius: 14px; background: #f1f3f4; padding: 0 11px 0 12px; }
.url { margin-left: 12px; font-size: 13.350px; color: #202124; flex: 1; white-space: nowrap; }
.path { color: #6a6e73; }
.exts { display: flex; align-items: center; margin-left: 13px; }
.exts svg:nth-child(2) { margin-left: 17px; }
.exts svg:nth-child(3) { margin-left: 16px; margin-top: 6px; }
.exts svg:nth-child(4) { margin-left: 9px; margin-top: 6px; }
.exts svg:nth-child(5) { margin-left: 11px; }
.avatar { margin-left: 14px; width: 22px; height: 22px; border-radius: 50%; background: #b7350a; color: #fff; font-size: 12px; line-height: 22px; text-align: center; }
.error { display: flex; align-items: center; margin-left: 8px; width: 68px; height: 28px; border: 1px solid #dd7a12; border-radius: 14px; background: #fdf5ea; color: #d9720b; font-size: 11.500px; padding-left: 11px; gap: 14px; }
.error i { width: 3px; height: 13px; background: radial-gradient(circle, #e08214 1.400px, transparent 1.700px) 0 0 / 3px 4.400px; }
.bookmarks { flex: 0 0 33px; display: grid; align-items: center; padding: 0 0 5px 13px; border-bottom: 1px solid #d3d5d8; background: #fff; grid-template-columns: 67px 33px 79px 93px 32px 31px 68px 32px 32px 32px 88px 114px 150px 153px 147px 149px 146px 150px 148px 99px 150px 152px 273px 30px 110px; font: 12px "Open Sans", "Noto Sans", sans-serif; letter-spacing: -.3px; color: #45484c; }
.bm { display: flex; align-items: center; gap: 8px; white-space: nowrap; }
.bm svg { width: 16px; height: 16px; }
.bm.dot { background: radial-gradient(circle, #2f7fd8 3px, transparent 3.500px) 9px -1px / 8px 8px no-repeat; }
.bm.more { font-size: 15px; }

/* console header */
.aws { flex: 0 0 41px; display: flex; align-items: center; background: #252f3e; border-bottom: 1px solid #545b64; color: #dfe3e5; padding-left: 37px; white-space: nowrap; }
.tri { display: inline-block; border: 4.500px solid transparent; border-top: 8px solid #e3e7e8; border-bottom: 0; margin-left: 5px; }
.services { font-size: 14px; margin-left: 33px; width: 653px; }
.awssearch { display: flex; align-items: center; width: 540px; height: 30px; border: 1px solid #879196; border-radius: 2px; background: #1b2029; color: #9fb0b3; font-size: 14px; padding: 0 10px 0 10px; }
.awssearch svg { color: #e3e7e8; }
.awssearch em { flex: 1; margin-left: 10px; }
.shell { margin-left: 575px; }
.bell { margin-left: 19px; }
.hitem { font-size: 12px; }
.user { margin-left: 17px; width: 425px; }
.region { width: 97px; }
.hitem .tri, .awsfoot .tri { margin-left: 5px; border-top-width: 7px; border-left-width: 4px; border-right-width: 4px; }

/* page */
.main { position: relative; flex: 0 0 1231px; display: flex; }
.side { position: relative; width: 191px; border-right: 1px solid #ddd; padding-top: 8px; font-size: 14px; }
.side h1 { margin: 0 0 4px 17px; font-size: 18px; font-weight: normal; line-height: 24px; }
.side a { display: flex; align-items: center; height: 30px; padding-left: 26px; position: relative; }
.side a.on { padding: 0 0 0 10px; margin: 2px 0 0 17px; font-weight: bold; }
.side a.on::before { content: ""; position: absolute; left: 0; top: 7px; width: 3px; height: 16px; background: #f90; }
.side a.cfg { color: #999; }
.side a.cfg::before { content: ""; position: absolute; left: 9px; top: 9px; width: 11px; height: 11px; border: 1px solid #555; border-radius: 2px; background: linear-gradient(#555, #555) center / 7px 1px no-repeat; }
.new { margin-left: 10px; height: 20px; width: 32px; text-align: center; line-height: 20px; border-radius: 4px; background: #44ad5c; color: #fff; font-size: 12px; font-weight: bold; position: relative; top: 1px; }
.collapse { position: absolute; left: 163px; top: 10px; width: 28px; height: 40px; border: 1px solid #ddd; border-right: 0; border-radius: 6px 0 0 6px; background: #fff; }
.collapse::after { content: ""; position: absolute; left: 9px; top: 13px; border: 6px solid transparent; border-right: 7px solid #666; border-left: 0; }
.content { width: 2362px; padding-left: 7px; }
.titlebar { display: flex; justify-content: space-between; align-items: center; width: 2355px; height: 51px; border-bottom: 1px solid #ccc; padding: 8px 16px 0 0; }
.titlebar h2 { margin: 2px 0 0; font-size: 18px; font-weight: normal; }
.titlebar span { color: #999; font-size: 14px; }
.toolbar { display: flex; align-items: center; width: 2355px; height: 50px; margin-top: 10px; border-top: 1px solid #bbb; border-bottom: 1px solid #bbb; background: linear-gradient(#ededed, #dcdcdc); padding-left: 8px; box-shadow: 0 2px 5px rgba(0,0,0,.06); }
.btn { display: flex; align-items: center; justify-content: center; height: 31px; border: 1px solid #b5b5b5; border-radius: 3px; background: linear-gradient(#fff, #dedede); font-weight: bold; font-size: 14px; gap: 9px; }
.caret { border: 5px solid transparent; border-top: 6px solid #444; border-bottom: 0; }
.default { width: 96px; }
.query { display: flex; align-items: center; width: 2014px; height: 32px; margin-left: 5px; border: 1px solid #bbb; border-radius: 3px; background: #fff; padding: 0 7px 0 5px; color: #999; font-size: 13px; }
.query svg { color: #555; }
.query em { flex: 1; margin-left: 6px; }
.help { width: 17px; height: 17px; margin-top: -4px; border-radius: 50%; background: #999; color: #fff; font: bold 14px/17px "Liberation Sans", sans-serif; text-align: center; }
.hour { width: 124px; margin-left: 6px; }
.pair { width: 79px; margin-left: 10px; gap: 0; }
.pair span { flex: 1; height: 29px; display: flex; align-items: center; justify-content: center; }
.pair span + span { border-left: 1px solid #b5b5b5; }
.maptools { display: flex; align-items: center; height: 32px; margin-top: 13px; }
.find { width: 450px; height: 32px; border: 1px solid #ccc; border-radius: 3px; color: #999; font-size: 14px; line-height: 30px; padding-left: 10px; margin-right: 1588px; }
.slider { position: relative; width: 105px; height: 5px; border-radius: 3px; background: #d8d8d8; margin: 0 18px 0 17px; }
.slider i { position: absolute; left: 11px; top: -10px; width: 6px; height: 24px; border-radius: 3px; background: #444; }
.legendlink { display: flex; align-items: center; margin-left: 20px; color: #2a67c1; font-size: 14px; gap: 6px; }
.legendlink i { width: 14px; height: 14px; border-radius: 50%; background: #1f63be; color: #fff; font: bold 12px/14px "Liberation Serif", serif; text-align: center; }
.resize { position: absolute; left: 2359px; top: 1093px; width: 182px; height: 126px; border: 1px solid #ccc; border-radius: 3px; background: #fff; padding: 13px 8px 0; font-size: 14px; }
.row { height: 34px; display: flex; align-items: center; justify-content: center; gap: 11px; }
.toggle { position: relative; width: 33px; height: 18px; border-radius: 9px; background: #545b64; }
.toggle::after { content: ""; position: absolute; left: 2px; top: 2px; width: 14px; height: 14px; border-radius: 50%; background: #fff; }
.seg { display: flex; height: 32px; margin-top: 5px; border: 1px solid #ccc; border-radius: 3px; }
.seg span { width: 58px; display: flex; align-items: center; justify-content: center; border-left: 1px solid #ccc; }
.seg .sel { width: 51px; margin: -1px 0 -1px -1px; background: #2773bf; border: 1px solid #155a9f; border-radius: 3px 0 0 3px; color: #fff; }
.seg span:last-child { width: 55px; }
.note { margin-top: 3px; }

/* service graph */
.map { position: absolute; left: 0; top: 0; pointer-events: none; }
.edge { fill: none; stroke: #c4c4c4; stroke-width: 1; }
.node circle { fill: #fff; stroke: #53aa6a; stroke-width: 2; }
.node text { text-anchor: middle; }
.val { font-size: 12.500px; fill: #444; }
.unit { font-size: 8.200px; fill: #555; }
.name { font-size: 9.300px; fill: #111; }
.name.client { font-weight: bold; font-size: 9px; fill: #333; }
.type { font-size: 8.600px; fill: #7d7d95; }
.acct { font-size: 8.600px; font-weight: bold; fill: #6f6f8c; }
.hl { fill: #edf5ff; fill-opacity: .9; }

/* footer and taskbar */
.awsfoot { flex: 0 0 35px; display: flex; align-items: center; background: #252f3e; border-top: 1px solid #4f5b60; color: #d5dbdb; font-size: 12px; padding: 0 20px; white-space: nowrap; }
.lang { margin-left: 25px; flex: 1; }
.copy { color: #a3aeb1; font-size: 11px; margin-right: 5px; }
.fl { margin-left: 25px; }
.taskbar { flex: 0 0 30px; display: flex; background: linear-gradient(90deg, #1f1b3c 800px, #2a3f44 862px, #2a3f44 915px, #2b2947 965px, #2b2947 1010px, #2f4245 1080px, #2f4245 1150px, #403845 1185px, #403845 1230px, #2f4346 1265px, #2f4346 1340px, #263450 1390px, #2c3c48 1460px, #2d2d44 1510px, #4f2a42 1575px, #4f2a42 1640px, #2a364b 1700px, #31424a 1780px, #2f4346 1950px, #243a48 2060px, #25233c 2105px); color: #fff; justify-content: space-between; }
.apps { display: flex; }
.app { flex: none; width: 37px; height: 30px; display: flex; align-items: center; justify-content: center; }
.app svg { width: 16px; height: 16px; }
.app.sys { width: 36.500px; }
.app.run { background: linear-gradient(#a9dcff, #a9dcff) center bottom / 28px 2px no-repeat; }
.app.cur { background: linear-gradient(#a9dcff, #a9dcff) center bottom / 37px 2px no-repeat #4b4760; }
.app.alert { background: linear-gradient(#ff7300, #ff7300) center bottom / 37px 2px no-repeat #a65c2c; border-right: 1px solid #5a3a34; }
.tray { display: flex; align-items: center; font: 13px "Open Sans", "Noto Sans", sans-serif; width: 357px; }
.temp { display: flex; gap: 9px; margin-left: 8px; width: 91px; white-space: nowrap; }
.wifi { margin-left: 12px; }
.dbx { margin-left: 9px; }
.vol { margin-left: 7px; }
.pen { margin-left: 10px; }
.clock { font-size: 11.500px; margin: 0 20px 0 17px; width: 44px; letter-spacing: -.2px; white-space: nowrap; }
.peek { width: 1px; height: 30px; background: #6d6a80; margin-left: 20px; }
```
FILE: map.js
```js
// Favicons of the open tabs, in order
const tabsA = "loop youtube udacity ACTIVE udacity bars udacity gitlab tc npm globe globe google yelp globe globe tblue tblue badge amazon zillow zillow zillow nn nn".split(" ");
const tabsB = "maps cp google rr rr rr ld ld rhouse teal bluehouse reddit google star github cube blackdog h24 stack bluedoc google quora chromegrey stack cube cube atom w3 stack dots cube webmd shield seal google npm github stack".split(" ");
const icon = id => `<svg><use href="#${id}"/></svg>`;
const tab = (id, i, all) => id === "ACTIVE"
  ? `<div class="tab active">/<svg viewBox="0 0 9 9"><path d="M1 1l7 7M8 1L1 8" stroke="#3c4043" stroke-width="1.600"/></svg></div>`
  : `<div class="tab${all[i + 1] === "ACTIVE" ? " noline" : ""}">${icon(id)}</div>`;
document.getElementById("tabs-a").innerHTML = tabsA.map(tab).join("");
document.getElementById("tabs-b").innerHTML = tabsB.map(tab).join("");

// Taskbar buttons: icon and state
const apps = [["windows", "sys"], ["tsearch", "sys"], ["cortana", "sys"], ["taskview", "sys"], ["chrome", "cur"], ["explorer", "run"], ["cmd", ""], ["monitor", ""], ["vscode", ""], ["pycharm", "run"], ["discord", "run"], ["avast", "alert"], ["tux", "run"], ["redk", "run"], ["steam", "alert"], ["ring", "alert"], ["calc", "run"], ["edge", "run"], ["chrome", "run"], ["notepad", "run"], ["paint", "run"], ["photos", "run"], ["gitbash", "run"]];
document.getElementById("apps-row").innerHTML = apps.map(([id, c]) => `<div class="app ${c}">${icon(id)}</div>`).join("");

// Service graph: key, x, y, latency, unit, rate, label, kind
const L = "AWS::Lambda", F = "AWS::Lambda::Function", C = "cool-collections-tracker-dev-";
const nodes = [
  ["client", 778.5, 838.7],
  ["api", 979.8, 850.3, "a1.91", "s", "0.2", "dev-cool-collections-tracker/d...", "AWS::ApiGateway::Stage"],
  ["n158s", 1163.8, 888.3, "1.58", "s", "0.02", C + "C...", L],
  ["n214", 1348.6, 926.7, "2.14", "s", "0.02", C + "C...", L],
  ["n573", 1038.8, 1029.3, "a573", "ms", "0.05", C + "A...", L],
  ["n205", 1223.6, 1067.3, "2.05", "s", "0.02", C + "G...", L],
  ["n185", 1407.7, 1105.3, "1.85", "s", "0.02", C + "D...", L],
  ["n178", 1532.7, 964.5, "178", "ms", "0.02", C + "C...", F],
  ["n182", 1473.3, 785.8, "182", "ms", "0.02", C + "UpdateCollection", F],
  ["n44", 1658.2, 823.5, "a44", "ms", "0.4", "CloudWatch", "AWS::CloudWatch"],
  ["n174", 1843, 861.5, "174", "ms", "0.02", C + "D...", F],
  ["n100", 1717.5, 1002.5, "a100", "ms", "0.1", "Collections-dev", "AWS::DynamoDB::Table"],
  ["n221", 1901.9, 1040.3, "a221", "ms", "0.03", C + "G...", F],
  ["n179", 1592.5, 1143.4, "179", "ms", "0.02", C + "G...", F],
  ["n217", 1500.7, 308, "217", "ms", "0.02", C + "G...", F],
  ["n181", 1170.6, 389.7, "1.81", "s", "0.02", C + "U...", L],
  ["n16", 1355.3, 427.8, "1.6", "s", "0.02", C + "G...", L],
  ["n158", 1616, 457.3, "158", "ms", "0.02", C + "C...", F],
  ["n90", 1800.7, 495, "a90", "ms", "0.08", "Collected-items-dev", "AWS::DynamoDB::Table"],
  ["n196", 1045.3, 530.4, "1.96", "s", "0.02", C + "D...", L],
  ["n188", 1229.8, 568.6, "1.88", "s", "0.02", C + "G...", L],
  ["n242d", 1414.5, 606.8, "242", "ms", "0.02", C + "D...", F],
  ["n242g", 1598.7, 644.7, "242", "ms", "0.02", C + "G...", F],
  ["n245", 1783.4, 682.7, "245", "ms", "0.02", C + "U...", F],
  ["n207", 1104.8, 709.7, "2.07", "s", "0.02", C + "U...", L],
  ["n189", 1289, 747.8, "1.89", "s", "0.02", C + "G...", L],
  ["n224", 1953.7, 605, "224", "ms", "0.02", C + "G...", F],
  ["n13", 1282.5, 1246, "a1.3", "s", "0.05", C + "G...", L],
  ["n249", 1467, 1284.3, "a249", "ms", "0.05", C + "A...", F]
];
const at = Object.fromEntries(nodes.map(n => [n[0], n]));

const straight = "client-api api-n196 api-n181 api-n207 api-n189 api-n158s api-n573 api-n205 api-n185 api-n13 n189-n179 n214-n178 n185-n174 n573-n249 n16-n217 n181-n245 n158-n90 n158-n44 n242d-n44 n242d-n100 n242g-n90 n242g-n44 n245-n90 n245-n44 n182-n44 n182-n100 n178-n44 n178-n100 n174-n44 n174-n90 n221-n44 n221-n100 n179-n44 n179-n100 n224-n90 n224-n44";
const GAP = 38.5;
const paths = straight.split(" ").map(e => {
  const [a, b] = e.split("-").map(k => at[k]);
  const dx = b[1] - a[1], dy = b[2] - a[2], d = Math.hypot(dx, dy), ux = dx / d * GAP, uy = dy / d * GAP;
  return `M${a[1] + ux} ${a[2] + uy}L${b[1] - ux} ${b[2] - uy}`;
});
// Edges that bend round a node in between
for (const k of ["api", "n196", "n188", "n207"]) {
  const [, x, y] = at[k];
  paths.push(`M${x + 37.5} ${y + 7.2}Q${x + 248} ${y - 39} ${x + 329.8} ${y + 70.3}`);
}
paths.push("M1004.8 822Q1044.6 529 1329.8 458.3", "M1004.8 822Q1051.6 628 1204.8 599.3", "M1191.4 862Q1242.7 543 1589 485.3", "M1319 1231Q1520 1029 1865.3 1053.3", "M1255.7 1046.7Q1568 724 1923 627");

const textFit = (cls, x, y, s, w) => `<text class="${cls}" x="${x}" y="${y}"${w ? ` textLength="${w}" lengthAdjust="spacingAndGlyphs"` : ""}>${s}</text>`;
const typeWidth = { [L]: 48.5, [F]: 81, "AWS::ApiGateway::Stage": 86, "AWS::CloudWatch": 62, "AWS::DynamoDB::Table": 82 };
const nameWidth = { CloudWatch: 47, "Collections-dev": 60, "Collected-items-dev": 78 };
let out = paths.map(d => `<path class="edge" marker-end="url(#arrow)" d="${d}"/>`).join("");
for (const [key, x, y, v, u, r, label, kind] of nodes) {
  out += `<g class="node"><circle cx="${x}" cy="${y}" r="33.300"/>`;
  if (key === "client") {
    out += `<circle cx="${x}" cy="${y - 5.500}" r="5.500" style="fill:#444;stroke:none"/><path d="M${x - 10} ${y + 8}q0-8 6-8q4 3 8 0q6 0 6 8q0 3-3 3h-14q-3 0-3-3z" fill="#444"/>` + textFit("name client", x, y + 53.200, "Client", 24.5) + "</g>";
    continue;
  }
  const avg = v[0] === "a";
  out += `<text class="val" x="${x}" y="${y - 3.400}">${avg ? '<tspan class="unit">avg. </tspan>' : ""}${avg ? v.slice(1) : v}<tspan class="unit">${u}</tspan></text>`;
  out += `<text class="val" x="${x}" y="${y + 15.600}">${r}<tspan class="unit"> t/min</tspan></text>`;
  const full = label.endsWith("UpdateCollection");
  if (full) out += `<rect class="hl" x="${x - 106.500}" y="${y + 43}" width="213" height="40" rx="4"/>`;
  out += textFit("name", x, y + 52.900, label, full ? 177 : nameWidth[label] || 122.5);
  out += textFit("type", x, y + 65.300, kind, typeWidth[kind]);
  if (kind === F) out += textFit("acct", x, y + 77.700, "Acct#: 311928346907", 75);
  out += "</g>";
}
document.getElementById("map").insertAdjacentHTML("beforeend", out);
```
